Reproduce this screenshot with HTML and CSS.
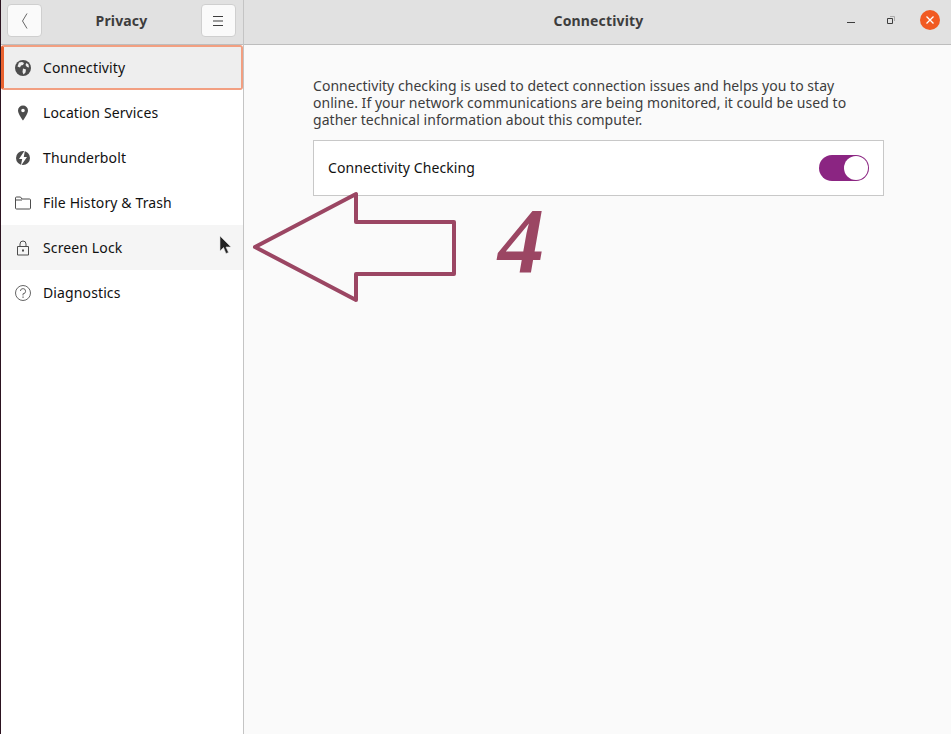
FILE: index.html
```html
<!DOCTYPE html>
<html lang="en">
<head>
<meta charset="utf-8">
<title>Connectivity</title>
<link rel="stylesheet" href="styles.css">
</head>
<body>
<div class="window">
  <aside class="sidebar">
    <header class="side-head">
      <button class="btn" aria-label="Back">
        <svg width="16" height="16" viewBox="0 0 16 16"><path d="M10 .5 5.500 8 10 15.500" fill="none" stroke="#666" stroke-width="1"/></svg>
      </button>
      <span class="title">Privacy</span>
      <button class="btn" aria-label="Menu">
        <svg width="16" height="16" viewBox="0 0 16 16"><path d="M3 3.500h10M3 8h10M3 12.500h10" fill="none" stroke="#3d3d3d" stroke-width="1"/></svg>
      </button>
    </header>
    <nav class="nav">
      <div class="row active">
        <svg class="ico" width="16" height="16" viewBox="0 0 16 16"><circle cx="8" cy="8" r="8" fill="#4d4d4d"/><path d="M4 2.500 7 2l2 1-1 2-2 .5-1 2-2.500-1zM8 8.500l3 1-.5 3-2 2-1-2.500zM11.500 3l2 1.500.5 3-2-.5-1.500-2z" fill="#eee"/></svg>
        <span>Connectivity</span>
      </div>
      <div class="row">
        <svg class="ico" width="16" height="16" viewBox="0 0 16 16"><path fill-rule="evenodd" d="M8 .5a5 5 0 0 0-5 5c0 3.500 5 10 5 10s5-6.500 5-10a5 5 0 0 0-5-5zm0 3.200a1.800 1.800 0 1 1 0 3.600 1.800 1.800 0 0 1 0-3.600z" fill="#4d4d4d"/></svg>
        <span>Location Services</span>
      </div>
      <div class="row">
        <svg class="ico" width="16" height="16" viewBox="0 0 16 16"><circle cx="8" cy="8" r="7" fill="#4d4d4d"/><path d="M10 0 4 9H7.200L5.800 16 12 7H8.800z" fill="#fff"/></svg>
        <span>Thunderbolt</span>
      </div>
      <div class="row">
        <svg class="ico" width="16" height="16" viewBox="0 0 16 16"><path d="M.5 13V3a1 1 0 0 1 1-1h4l1.500 2h7.500a1 1 0 0 1 1 1v8a1 1 0 0 1-1 1h-13a1 1 0 0 1-1-1zM.5 5h6.500" fill="none" stroke="#4d4d4d"/></svg>
        <span>File History &amp; Trash</span>
      </div>
      <div class="row hover">
        <svg class="ico" width="16" height="16" viewBox="0 0 16 16"><path d="M2.500 6.500h11v8.500h-11zM5 6.500V4a3 3 0 0 1 6 0v2.500" fill="none" stroke="#4d4d4d"/><rect x="7" y="9.500" width="2" height="2" fill="#4d4d4d"/></svg>
        <span>Screen Lock</span>
      </div>
      <div class="row">
        <svg class="ico" width="16" height="16" viewBox="0 0 16 16"><circle cx="8" cy="8" r="7.500" fill="none" stroke="#666"/><path d="M5.400 6A2.600 2.600 0 1 1 8 8.800V10.500" fill="none" stroke="#666"/><rect x="7.400" y="11.500" width="1.300" height="1.300" fill="#666"/></svg>
        <span>Diagnostics</span>
      </div>
    </nav>
  </aside>
  <main class="main">
    <header class="main-head">
      <span class="title">Connectivity</span>
      <div class="controls">
        <svg class="min" width="8" height="8" viewBox="0 0 8 8"><rect y="6" width="8" height="1" fill="#3d3d3d"/></svg>
        <svg width="8" height="8" viewBox="0 0 8 8"><path d="M.5 2.500h5v5h-5z" fill="none" stroke="#3d3d3d"/><path d="M3 .5h4.500V5" fill="none" stroke="#aaa"/></svg>
        <span class="close"><svg width="10" height="10" viewBox="0 0 10 10"><path d="M1.500 1.500l7 7M8.500 1.500l-7 7" stroke="#fff" stroke-width="1.300"/></svg></span>
      </div>
    </header>
    <section class="content">
      <p class="desc">Connectivity checking is used to detect connection issues and helps you to stay online. If your network communications are being monitored, it could be used to gather technical information about this computer.</p>
      <div class="card">
        <span class="card-label">Connectivity Checking</span>
        <span class="switch"><span class="knob"></span></span>
      </div>
    </section>
  </main>
</div>
<svg class="arrow" width="210" height="112" viewBox="0 0 210 112"><path d="M5 56 106 3V31H204V83H106V109Z" fill="none" stroke="#9b4663" stroke-width="4" stroke-linejoin="round"/></svg>
<span class="four">4</span>
<svg class="cursor" width="14" height="20" viewBox="0 0 14 20"><path d="M1 1V16L4.500 12.500 7 18.500 9.500 17.500 7 12H12z" fill="#222" stroke="#ddd" stroke-width=".6"/></svg>
</body>
</html>
```
FILE: styles.css
```css
* { box-sizing: border-box; }
html, body { margin: 0; height: 100%; }
body {
  background: #fff;
  font-family: "Noto Sans", "Open Sans", sans-serif;
  font-size: 14px;
  color: #111;
  overflow: hidden;
  position: relative;
}
.window {
  display: flex;
  height: 734px;
  border-left: 1px solid #2c1320;
}
.sidebar {
  width: 243px;
  flex: none;
  border-right: 1px solid #c4c4c4;
  background: #fff;
}
.side-head, .main-head {
  height: 45px;
  background: #e1e1e1;
  border-bottom: 1px solid #bdbdbd;
  display: flex;
  align-items: center;
  padding-bottom: 3px;
}
.side-head {
  justify-content: space-between;
  padding-left: 6px;
  padding-right: 7px;
}
.btn {
  width: 35px;
  height: 33px;
  padding: 0;
  background: #fafafa;
  border: 1px solid #cfcfcf;
  border-radius: 4px;
  display: flex;
  align-items: center;
  justify-content: center;
}
.title {
  font-weight: 700;
  font-size: 14px;
  letter-spacing: .15px;
  color: #3d3d3d;
}
.nav { display: flex; flex-direction: column; }
.row {
  height: 45px;
  display: flex;
  align-items: center;
  gap: 12px;
  padding-left: 14px;
  letter-spacing: .12px;
}
.ico { flex: none; }
.active {
  background: #eee;
  border: 2px solid #f29f81;
  border-left: 3px solid #e9622f;
  border-radius: 3px;
  padding-left: 11px;
}
.hover { background: #f5f5f5; }
.main { flex: 1; background: #fafafa; min-width: 0; }
.main-head { position: relative; justify-content: center; padding-left: 2px; }
.controls {
  position: absolute;
  right: 11px;
  top: 10px;
  display: flex;
  align-items: center;
  gap: 25px;
}
.min { margin-right: 7px; }
.close {
  width: 20px;
  height: 20px;
  border-radius: 50%;
  background: #f15a22;
  display: flex;
  align-items: center;
  justify-content: center;
}
.content { padding: 32px 67px 0 69px; }
.desc {
  margin: 0 0 12px;
  font-size: 14px;
  line-height: 17px;
  letter-spacing: .04px;
  color: #3d3d3d;
  width: 550px;
}
.card {
  height: 56px;
  background: #fff;
  border: 1px solid #c8c8c8;
  display: flex;
  align-items: center;
  justify-content: space-between;
  padding: 0 14px;
}
.card-label { letter-spacing: .1px; margin-bottom: 2px; }
.switch {
  width: 50px;
  height: 26px;
  border-radius: 13px;
  background: #8b2582;
  display: flex;
  justify-content: flex-end;
  padding: 1px;
}
.knob {
  width: 24px;
  height: 24px;
  border-radius: 50%;
  background: #fff;
}
.arrow { position: absolute; left: 250px; top: 191px; }
.four {
  position: absolute;
  left: 498px;
  top: 194px;
  font: italic 700 93px/1 "Liberation Serif", serif;
  color: #9b4663;
}
.cursor { position: absolute; left: 219px; top: 235px; }
```
